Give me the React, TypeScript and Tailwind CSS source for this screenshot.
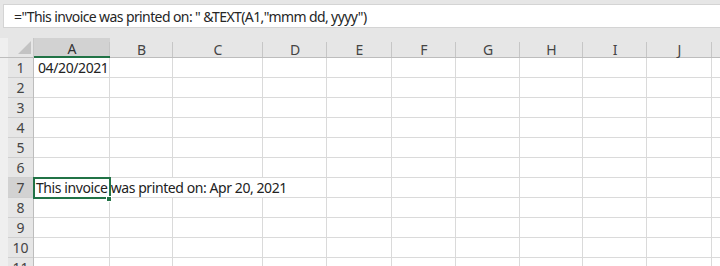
import React from "react";

const colWidths = [76, 63, 90, 64, 65, 64, 64, 63, 64, 65];
const letters = ["A", "B", "C", "D", "E", "F", "G", "H", "I", "J"];
const rows = [1, 2, 3, 4, 5, 6, 7, 8, 9, 10, 11];

export default function App() {
  return (
    <div
      className="w-[720px] h-[266px] overflow-hidden bg-[#e6e6e6] text-[#222]"
      style={{ fontFamily: "'Noto Sans', 'Open Sans', sans-serif" }}
    >
      <div className="h-[38px] pt-[4px] pl-[3px]">
        <div className="h-[24px] bg-white border border-r-0 border-[#d4d4d4] flex items-center pl-[10px] text-[14px] tracking-[-0.6px] text-[#262626] whitespace-nowrap">
          ="This invoice was printed on: " &amp;TEXT(A1,"mmm dd, yyyy")
        </div>
      </div>
      <div className="grid grid-cols-[34px_76px_63px_90px_64px_65px_64px_64px_63px_64px_65px_1fr] grid-rows-[20px_repeat(11,20px)]">
        {/* corner */}
        <div className="flex bg-[#e6e6e6] border-b border-[#bdbdbd] border-r border-r-[#c8c8c8]">
          <div className="w-[8px] bg-[#efefef]" />
          <div className="flex-1 flex items-end justify-end pr-[2px] pb-[3px]">
            <svg width="13" height="13" viewBox="0 0 13 13">
              <polygon points="13,0 13,13 0,13" fill="#c3c3c3" />
            </svg>
          </div>
        </div>
        {letters.map((l, i) => (
          <div
            key={l}
            className={
              i === 0
                ? "relative bg-[#d2d2d2] border-b-2 border-[#217346] flex items-center justify-center text-[14px] text-[#333]"
                : "relative bg-[#e6e6e6] border-b border-[#bdbdbd] flex items-center justify-center text-[14px] text-[#444]"
            }
          >
            <span className="pt-[3px]">{l}</span>
            <div className="absolute right-0 top-[4px] bottom-0 w-px bg-[#c6c6c6]" />
          </div>
        ))}
        <div className="bg-[#e6e6e6] border-b border-[#bdbdbd]" />

        {rows.map((r) => (
          <React.Fragment key={r}>
            <div className="flex border-r border-[#bdbdbd]">
              <div className="w-[8px] bg-[#efefef]" />
              <div
                className={
                  (r === 7 ? "bg-[#d2d2d2] " : "bg-[#e6e6e6] ") +
                  "flex-1 flex items-end justify-center border-b border-[#cfcfcf] text-[14px] text-[#444] leading-[19px]"
                }
              >
                {r}
              </div>
            </div>
            {colWidths.map((_, c) => {
              const hideRight = r === 7 && (c === 1 || c === 2);
              return (
                <div
                  key={c}
                  className={
                    "relative bg-white border-b border-[#dadada] " +
                    (hideRight ? "" : "border-r")
                  }
                >
                  {r === 1 && c === 0 && (
                    <span className="absolute left-[4px] bottom-[0px] z-10 text-[14px] tracking-[-0.4px] leading-[19px] whitespace-nowrap">
                      04/20/2021
                    </span>
                  )}
                  {r === 7 && c === 0 && (
                    <>
                      <span className="absolute left-[2px] bottom-[0px] z-10 text-[14px] tracking-[-0.42px] leading-[19px] whitespace-nowrap">
                        This invoice was printed on: Apr 20, 2021
                      </span>
                      <div className="absolute left-[-1px] top-[-1px] w-[78px] h-[22px] border-2 border-[#217346] z-20" />
                      <div className="absolute left-[72px] top-[18px] w-[6px] h-[6px] bg-[#217346] border border-white z-30" />
                    </>
                  )}
                </div>
              );
            })}
            <div className="bg-white border-b border-[#dadada]" />
          </React.Fragment>
        ))}
      </div>
    </div>
  );
}
